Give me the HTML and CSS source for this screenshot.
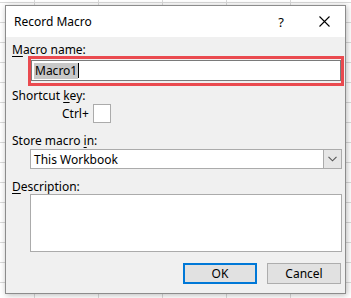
FILE: index.html
```html
<!DOCTYPE html>
<html>
<head>
  <title>Record Macro</title>
  <link rel="stylesheet" href="styles.css">
</head>
<body>
  <div class="dialog">
    <div class="titlebar">
      <span class="title">Record Macro</span>
      <span class="help">?</span>
      <span class="close">
        <svg width="11" height="11" viewBox="0 0 11 11"><path d="M0.5 0.5 L10.5 10.5 M10.5 0.5 L0.5 10.5" stroke="#000" stroke-width="1.1" fill="none"/></svg>
      </span>
    </div>
    <div class="content">
      <div class="label label-first"><u>M</u>acro name:</div>
      <div class="highlight">
        <div class="textbox"><span class="selected">Macro1</span><span class="caret"></span></div>
      </div>

      <div class="label label-short">Shortcut <u>k</u>ey:</div>
      <div class="shortcut-row">
        <span class="ctrl">Ctrl+</span>
        <span class="keybox"></span>
      </div>

      <div class="label label-gap">Store macro <u>i</u>n:</div>
      <div class="dropdown">
        <span class="dropdown-text">This Workbook</span>
        <span class="dropdown-btn">
          <svg width="9" height="6" viewBox="0 0 9 6"><path d="M0.5 0.8 L4.5 4.8 L8.5 0.8" stroke="#555" stroke-width="1.1" fill="none"/></svg>
        </span>
      </div>

      <div class="label label-gap"><u>D</u>escription:</div>
      <div class="description"></div>

      <div class="buttons">
        <button class="btn btn-ok">OK</button>
        <button class="btn">Cancel</button>
      </div>
    </div>
  </div>
</body>
</html>
```

FILE: styles.css
```css
html, body {
  margin: 0;
  height: 100%;
}
body {
  font-family: "Noto Sans", "Liberation Sans", sans-serif;
  font-size: 12px;
  color: #000;
  background-color: #fff;
  background-image:
    linear-gradient(to right, #d9d9d9 1px, transparent 1px),
    linear-gradient(to bottom, #d9d9d9 1px, transparent 1px);
  background-size: 64px 100%, 100% 20px;
  background-position: 34px 0, 0 2px;
  padding: 5px 0 0 5px;
  box-sizing: border-box;
  overflow: hidden;
}
.dialog {
  width: 341px;
  height: 289px;
  box-sizing: border-box;
  border: 1px solid #8c8c8c;
  background: #f0f0f0;
  box-shadow: 1px 1px 6px rgba(0, 0, 0, 0.28);
  display: flex;
  flex-direction: column;
}
.titlebar {
  height: 31px;
  background: #fff;
  display: flex;
  align-items: center;
  padding-left: 8px;
  flex-shrink: 0;
}
.title {
  flex: 1;
  font-size: 12px;
  letter-spacing: 0;
}
.help {
  width: 14px;
  text-align: center;
  margin-right: 31px;
  font-size: 13px;
}
.close {
  width: 11px;
  height: 11px;
  margin-right: 15px;
  display: flex;
}
.content {
  padding: 0 3px 0 6px;
  display: flex;
  flex-direction: column;
}
.label {
  line-height: 15px;
  height: 15px;
}
.label u {
  text-decoration-thickness: 1px;
  text-underline-offset: 2px;
}
.label-first {
  margin-top: 5px;
}
.label-short {
  margin-top: 2px;
}
.label-gap {
  margin-top: 10px;
}
.highlight {
  margin-top: -1px;
  margin-left: 16px;
  width: 316px;
  height: 30px;
  box-sizing: border-box;
  border: 3px solid #ea4a4f;
  padding: 1px 0 2px 0;
}
.textbox {
  height: 21px;
  box-sizing: border-box;
  background: #fff;
  border: 1px solid #7a7a7a;
  display: flex;
  align-items: center;
  padding-left: 2px;
}
.selected {
  background: #c8c8c8;
  line-height: 16px;
  padding: 0 1px;
}
.caret {
  width: 1px;
  height: 15px;
  background: #000;
}
.shortcut-row {
  margin-top: 1px;
  margin-left: 50px;
  display: flex;
  align-items: center;
  height: 19px;
}
.ctrl {
  margin-right: 4px;
}
.keybox {
  width: 18px;
  height: 19px;
  box-sizing: border-box;
  background: #fff;
  border: 1px solid #ababab;
}
.dropdown {
  margin-top: 1px;
  margin-left: 18px;
  width: 312px;
  height: 20px;
  box-sizing: border-box;
  background: #fff;
  border: 1px solid #ababab;
  display: flex;
  align-items: center;
}
.dropdown-text {
  flex: 1;
  padding-left: 3px;
}
.dropdown-btn {
  width: 17px;
  height: 18px;
  background: #e6e6e6;
  border-left: 1px solid #ababab;
  display: flex;
  align-items: center;
  justify-content: center;
}
.description {
  margin-left: 18px;
  width: 312px;
  height: 58px;
  box-sizing: border-box;
  background: #fff;
  border: 1px solid #ababab;
}
.buttons {
  margin-top: 11px;
  margin-right: 1px;
  display: flex;
  justify-content: flex-end;
  gap: 10px;
}
.btn {
  width: 74px;
  height: 21px;
  box-sizing: border-box;
  background: #e1e1e1;
  border: 1px solid #adadad;
  font-family: "Noto Sans", "Liberation Sans", sans-serif;
  font-size: 12px;
  color: #000;
  padding: 0;
}
.btn-ok {
  border: 2px solid #0078d7;
}
```
